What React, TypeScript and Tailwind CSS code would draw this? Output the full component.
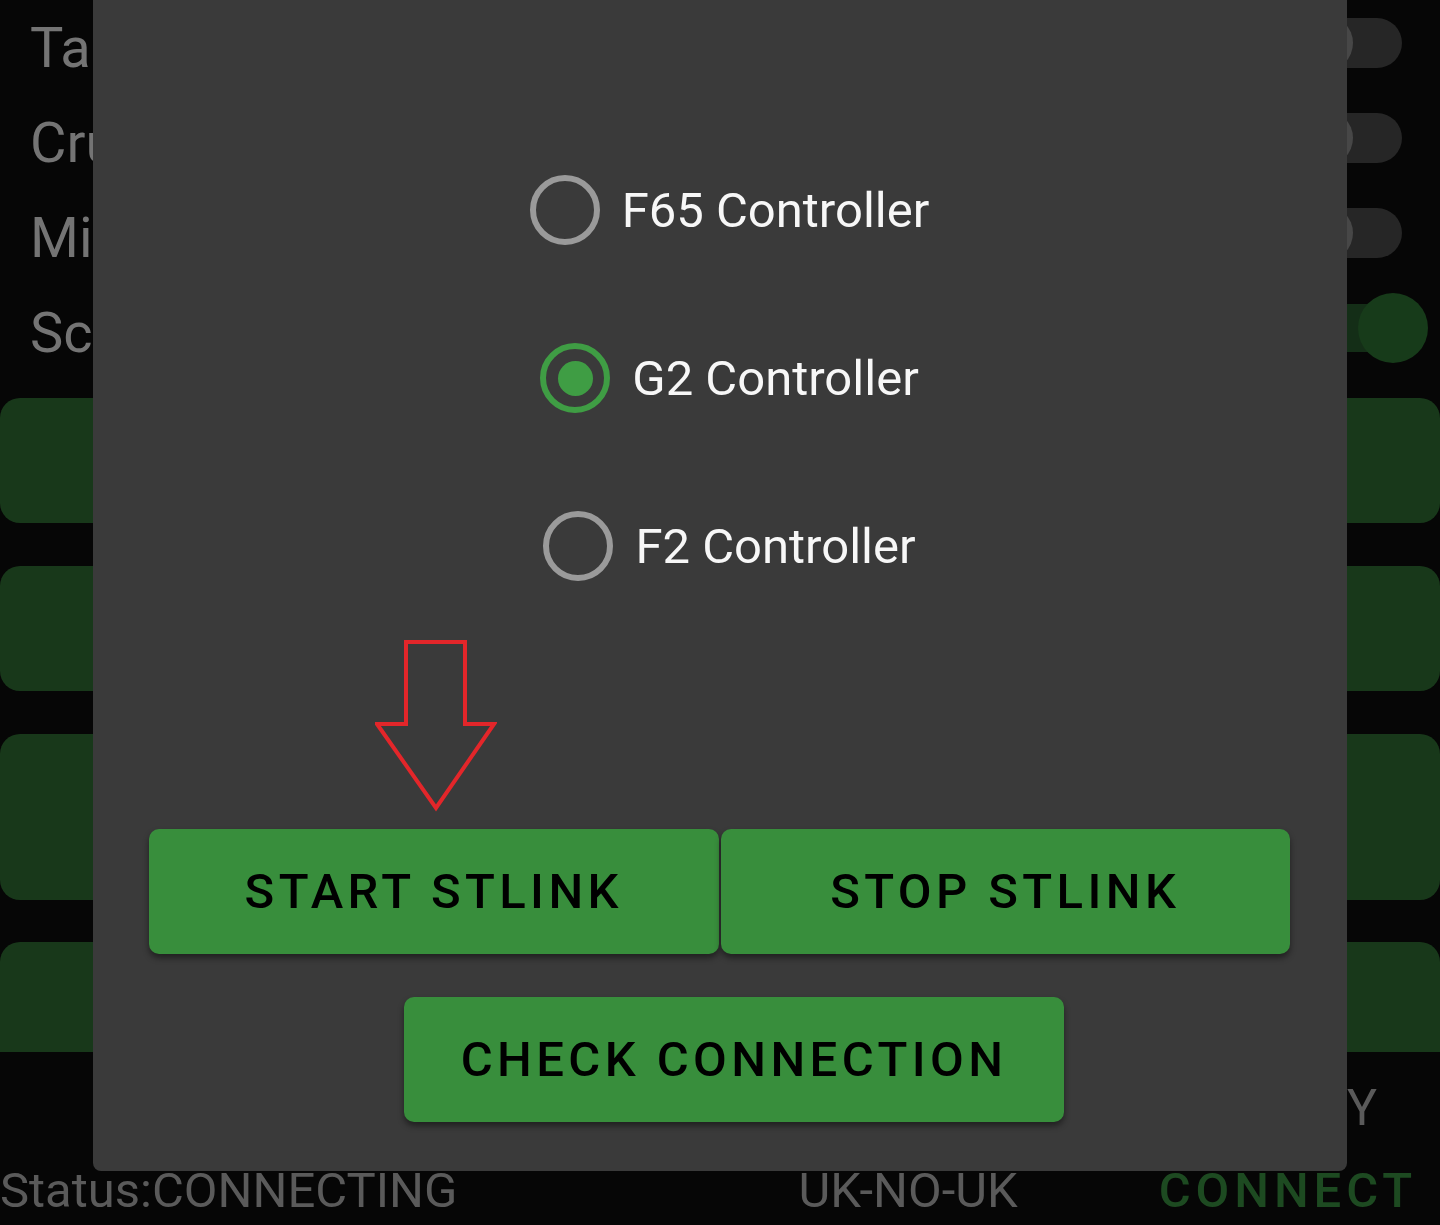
import React from 'react';

const rows = [
  { label: 'Tank', on: false },
  { label: 'Cruise', on: false },
  { label: 'Mirror', on: false },
  { label: 'Screen', on: true },
];

function Switch({ on }: { on: boolean }) {
  if (on) {
    return (
      <div className="relative mb-[10px] mr-[38px] h-[48px] w-[100px] rounded-full bg-[#142e17]">
        <div className="absolute right-[-26px] top-[-11px] h-[70px] w-[70px] rounded-full bg-[#173b1a]" />
      </div>
    );
  }
  return (
    <div className="relative mb-[10px] mr-[38px] h-[50px] w-[100px] rounded-full bg-[#262626]">
      <div className="absolute left-[-5px] top-[-3px] h-[56px] w-[56px] rounded-full bg-[#474747]" />
    </div>
  );
}

function Radio({ label, checked }: { label: string; checked?: boolean }) {
  return (
    <div className="flex h-[168px] items-center justify-center pl-[20px]">
      <div className="flex items-center gap-[22px]">
        {checked ? (
          <div className="flex h-[70px] w-[70px] items-center justify-center rounded-full border-[6px] border-[#3f9d44]">
            <div className="h-[35px] w-[35px] rounded-full bg-[#3f9d44]" />
          </div>
        ) : (
          <div className="h-[70px] w-[70px] rounded-full border-[6px] border-[#9a9a9a]" />
        )}
        <span className="text-[49px] leading-none text-[#f7f7f7]">{label}</span>
      </div>
    </div>
  );
}

function DownArrow() {
  return (
    <svg width="122" height="172" viewBox="0 0 122 172" fill="none">
      <polygon
        points="31,2 90,2 90,84 119,84 61,168 2,84 31,84"
        stroke="#e3262a"
        strokeWidth="4"
        strokeLinejoin="miter"
      />
    </svg>
  );
}

export default function App() {
  return (
    <div className="relative h-[1225px] w-[1440px] overflow-hidden bg-[#060606] font-[Roboto,sans-serif]">
      {/* background screen, dimmed */}
      <div className="flex h-full flex-col">
        <div className="flex flex-col">
          {rows.map((r) => (
            <div key={r.label} className="flex h-[95px] items-center justify-between">
              <span className="pl-[30px] text-[56px] leading-none text-[#747474]">{r.label}</span>
              <Switch on={r.on} />
            </div>
          ))}
        </div>
        <div className="mt-[18px] flex flex-col">
          <div className="h-[125px] rounded-[20px] bg-[#18381a]" />
          <div className="mt-[43px] h-[125px] rounded-[20px] bg-[#18381a]" />
          <div className="mt-[43px] h-[166px] rounded-[20px] bg-[#18381a]" />
          <div className="mt-[42px] h-[110px] rounded-t-[20px] bg-[#18381a]" />
        </div>
        <div className="flex h-[112px] items-center justify-end pr-[63px]">
          <span className="text-[50px] leading-none text-[#5a5a5a]">Y</span>
        </div>
        <div className="flex h-[52px] items-center">
          <span className="text-[49px] leading-none text-[#5a5a5a]">Status:CONNECTING</span>
          <span className="ml-[341px] text-[49px] leading-none text-[#5a5a5a]">UK-NO-UK</span>
          <span className="ml-[141px] text-[49px] font-medium leading-none tracking-[0.1em] text-[#1d4a21]">
            CONNECT
          </span>
        </div>
      </div>

      {/* dialog */}
      <div className="absolute left-[93px] top-0 flex h-[1171px] w-[1254px] flex-col rounded-b-[8px] bg-[#3a3a3a] pl-[56px] pr-[57px]">
        <div className="pt-[126px]">
          <Radio label="F65 Controller" />
          <Radio label="G2 Controller" checked />
          <Radio label="F2 Controller" />
        </div>
        <div className="h-[199px] pl-[226px] pt-[10px]">
          <DownArrow />
        </div>
        <div className="flex h-[125px] gap-[2px]">
          <button className="flex flex-1 items-center justify-center rounded-[10px] bg-[#388e3c] text-[49px] font-medium tracking-[0.09em] text-black shadow-[0_4px_6px_rgba(0,0,0,0.45)]">
            START STLINK
          </button>
          <button className="flex flex-1 items-center justify-center rounded-[10px] bg-[#388e3c] text-[49px] font-medium tracking-[0.09em] text-black shadow-[0_4px_6px_rgba(0,0,0,0.45)]">
            STOP STLINK
          </button>
        </div>
        <button className="ml-[255px] mt-[43px] flex h-[125px] w-[660px] items-center justify-center rounded-[10px] bg-[#388e3c] text-[49px] font-medium tracking-[0.09em] text-black shadow-[0_4px_6px_rgba(0,0,0,0.45)]">
          CHECK CONNECTION
        </button>
      </div>
    </div>
  );
}
